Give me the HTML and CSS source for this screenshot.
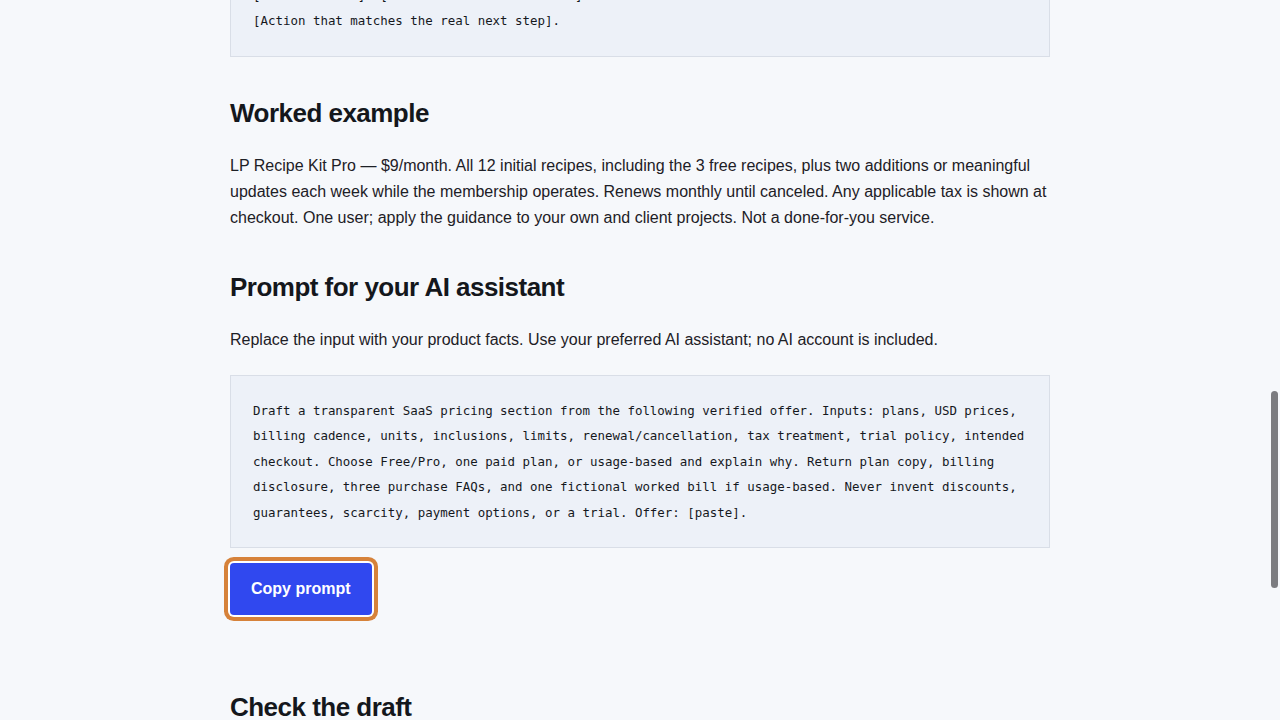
FILE: index.html
```html
<!DOCTYPE html>
<html lang="en">
<head>
<meta charset="utf-8">
<title>Pricing section guide</title>
<link rel="stylesheet" href="styles.css">
</head>
<body>
<main class="page">
<pre class="code">[Plan name] — [price]/[cadence].
[Renewal terms]: [Rules and material limits].
[Action that matches the real next step].</pre>

<h2 class="heading">Worked example</h2>
<p class="text">LP Recipe Kit Pro — $9/month. All 12 initial recipes, including the 3 free recipes, plus two additions or meaningful updates each week while the membership operates. Renews monthly until canceled. Any applicable tax is shown at checkout. One user; apply the guidance to your own and client projects. Not a done-for-you service.</p>

<h2 class="heading">Prompt for your AI assistant</h2>
<p class="text">Replace the input with your product facts. Use your preferred AI assistant; no AI account is included.</p>
<pre class="code">Draft a transparent SaaS pricing section from the following verified offer. Inputs: plans, USD prices,
billing cadence, units, inclusions, limits, renewal/cancellation, tax treatment, trial policy, intended
checkout. Choose Free/Pro, one paid plan, or usage-based and explain why. Return plan copy, billing
disclosure, three purchase FAQs, and one fictional worked bill if usage-based. Never invent discounts,
guarantees, scarcity, payment options, or a trial. Offer: [paste].</pre>
<div class="actions">
<button class="copy-btn" type="button">Copy prompt</button>
</div>

<h2 class="heading">Check the draft</h2>
</main>
<div class="scrollbar"></div>
</body>
</html>
```

FILE: styles.css
```css
html, body {
  margin: 0;
  padding: 0;
}

body {
  height: 720px;
  overflow: hidden;
  background: #f6f8fb;
  color: #1d2026;
  font-family: "Liberation Sans", Arial, sans-serif;
}

.page {
  width: 820px;
  margin: -66px auto 0;
}

.code {
  margin: 0;
  padding: 22px;
  background: #edf1f8;
  border: 1px solid #d9dee7;
  font-family: "DejaVu Sans Mono", "Liberation Mono", monospace;
  font-size: 12.45px;
  line-height: 25.5px;
  color: #15181d;
  white-space: pre-wrap;
}

.heading {
  margin: 40px 0 24px;
  font-size: 26px;
  line-height: 32px;
  font-weight: 700;
  letter-spacing: -0.02em;
  color: #14171c;
}

.text {
  margin: 0 0 22px;
  font-size: 16px;
  line-height: 26px;
}

.actions {
  padding: 15px 0 36px;
}

.copy-btn {
  display: inline-block;
  margin: 0;
  padding: 16px 21px;
  border: 0;
  border-radius: 4px;
  background: #3048ef;
  color: #ffffff;
  font-family: "Liberation Sans", Arial, sans-serif;
  font-size: 16px;
  line-height: 20px;
  font-weight: 700;
  box-shadow: 0 0 0 2px #ffffff, 0 0 0 6px #d6823a;
}

.scrollbar {
  position: fixed;
  top: 391px;
  right: 2px;
  width: 7px;
  height: 197px;
  border-radius: 4px;
  background: #7b7c80;
}
```
